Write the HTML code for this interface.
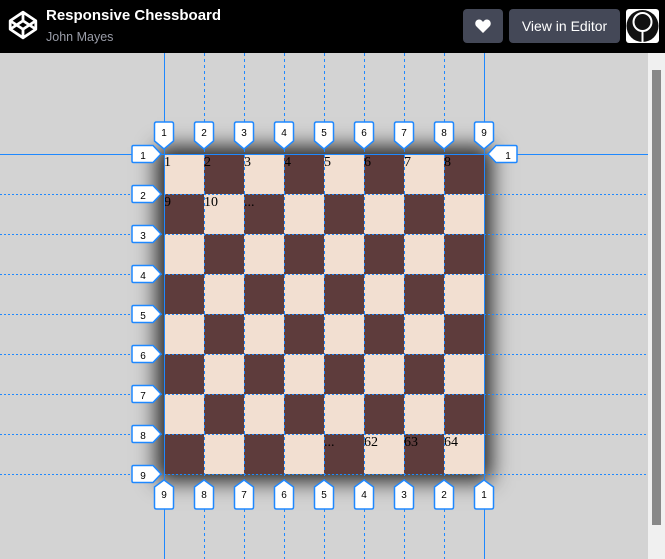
<!DOCTYPE html>
<html><head><meta charset="utf-8"><style>
*{margin:0;padding:0;box-sizing:border-box}
html,body{width:665px;height:559px;overflow:hidden}
body{background:#d3d3d3;position:relative;font-family:"Liberation Sans",sans-serif}
.hdr{position:absolute;left:0;top:0;width:665px;height:53px;background:#000}
.t1{position:absolute;left:46px;top:7px;color:#fff;font-weight:bold;font-size:15px}
.t2{position:absolute;left:46px;top:30px;color:#9a9da8;font-size:12.5px}
.btn{position:absolute;top:9px;height:34px;background:#444857;border-radius:4px;color:#fff}
.sb{position:absolute;left:648px;top:53px;width:17px;height:506px;background:#f0f0f0}
.th{position:absolute;left:4px;top:17px;width:9px;height:455px;background:#888}
.board{position:absolute;left:164px;top:154px;width:320px;height:320px;display:grid;grid-template-columns:repeat(8,40px);grid-template-rows:repeat(8,40px);box-shadow:0 0 20px 7px rgba(0,0,0,.85)}
.board div{font-family:"Liberation Serif",serif;font-size:14px;line-height:18px;color:#000}
.l{background:#f2dfd1}.d{background:#5e3c3c}
svg.ov{position:absolute;left:0;top:0}
</style></head><body>
<div class="hdr">
<svg style="position:absolute;left:7px;top:9px" width="32" height="32" viewBox="0 0 30 30" fill="none" stroke="#fff" stroke-width="2.6" stroke-linejoin="round"><path d="M15 3 L27 11 V19 L15 27 L3 19 V11 Z M3 11 L15 19 L27 11 M3 19 L15 11 L27 19 M15 3 V11 M15 19 V27"/></svg>
<div class="t1">Responsive Chessboard</div>
<div class="t2">John Mayes</div>
<div class="btn" style="left:463px;width:40px"><svg style="position:absolute;left:12px;top:10px" width="16" height="14" viewBox="0 0 16 14"><path d="M8 14 L1.5 7.5 C-1 5 0.5 0.5 4 0.5 C6 0.5 7 1.5 8 3 C9 1.5 10 0.5 12 0.5 C15.5 0.5 17 5 14.5 7.5 Z" fill="#fff"/></svg></div>
<div class="btn" style="left:509px;width:111px;font-size:14px;line-height:34px;text-align:center">View in Editor</div>
<div style="position:absolute;left:626px;top:9px;width:33px;height:34px;background:#fff;border-radius:3px;overflow:hidden"><svg width="33" height="34" viewBox="0 0 33 34"><circle cx="16.5" cy="17" r="16" fill="#111"/><circle cx="16.5" cy="13" r="9" fill="none" stroke="#fff" stroke-width="2"/><path d="M16.5 22 V33" stroke="#fff" stroke-width="2"/></svg></div>
</div>
<div class="sb"><div class="th"></div></div>
<div class="board">
<div class="l">1</div><div class="d">2</div><div class="l">3</div><div class="d">4</div><div class="l">5</div><div class="d">6</div><div class="l">7</div><div class="d">8</div>
<div class="d">9</div><div class="l">10</div><div class="d">...</div><div class="l"></div><div class="d"></div><div class="l"></div><div class="d"></div><div class="l"></div>
<div class="l"></div><div class="d"></div><div class="l"></div><div class="d"></div><div class="l"></div><div class="d"></div><div class="l"></div><div class="d"></div>
<div class="d"></div><div class="l"></div><div class="d"></div><div class="l"></div><div class="d"></div><div class="l"></div><div class="d"></div><div class="l"></div>
<div class="l"></div><div class="d"></div><div class="l"></div><div class="d"></div><div class="l"></div><div class="d"></div><div class="l"></div><div class="d"></div>
<div class="d"></div><div class="l"></div><div class="d"></div><div class="l"></div><div class="d"></div><div class="l"></div><div class="d"></div><div class="l"></div>
<div class="l"></div><div class="d"></div><div class="l"></div><div class="d"></div><div class="l"></div><div class="d"></div><div class="l"></div><div class="d"></div>
<div class="d"></div><div class="l"></div><div class="d"></div><div class="l"></div><div class="d">...</div><div class="l">62</div><div class="d">63</div><div class="l">64</div>
</div>
<svg class="ov" width="648" height="559" viewBox="0 0 648 559" font-family="Liberation Sans,sans-serif" font-size="10" text-anchor="middle">
<g stroke="#1e88ff" stroke-width="1" fill="none">
<path d="M164.5 53V559M484.5 53V559M0 154.5H648"/>
<path stroke-dasharray="3,3" d="M204.5 53V559M244.5 53V559M284.5 53V559M324.5 53V559M364.5 53V559M404.5 53V559M444.5 53V559"/>
<path stroke-dasharray="2,2" d="M0 194.5H648M0 234.5H648M0 274.5H648M0 314.5H648M0 354.5H648M0 394.5H648M0 434.5H648M0 474.5H648"/>
</g>
<defs>
<path id="tp" d="M-9.5 -31 q0-2 2-2 h15 q2 0 2 2 v17 l-9.5 8 l-9.5 -8 z"/>
<path id="bp" d="M-9.5 33 q0 2 2 2 h15 q2 0 2 -2 v-20 l-9.5 -7 l-9.5 7 z"/>
<path id="lp" d="M-31 -8 q0-1.5 1.5-1.5 h19.5 l8 8.5 l-8 8.5 h-19.5 q-1.5 0 -1.5 -1.5 z"/>
<path id="rp" d="M31 -8 q0-1.5 -1.5-1.5 h-19.5 l-8 8.5 l8 8.5 h19.5 q1.5 0 1.5 -1.5 z"/>
</defs>
<g fill="#fff" stroke="#1e88ff" stroke-width="1.5">
<use href="#tp" x="164" y="155"/><use href="#tp" x="204" y="155"/><use href="#tp" x="244" y="155"/><use href="#tp" x="284" y="155"/><use href="#tp" x="324" y="155"/><use href="#tp" x="364" y="155"/><use href="#tp" x="404" y="155"/><use href="#tp" x="444" y="155"/><use href="#tp" x="484" y="155"/>
<use href="#bp" x="164" y="474"/><use href="#bp" x="204" y="474"/><use href="#bp" x="244" y="474"/><use href="#bp" x="284" y="474"/><use href="#bp" x="324" y="474"/><use href="#bp" x="364" y="474"/><use href="#bp" x="404" y="474"/><use href="#bp" x="444" y="474"/><use href="#bp" x="484" y="474"/>
<use href="#lp" x="163" y="155"/><use href="#lp" x="163" y="195"/><use href="#lp" x="163" y="235"/><use href="#lp" x="163" y="275"/><use href="#lp" x="163" y="315"/><use href="#lp" x="163" y="355"/><use href="#lp" x="163" y="395"/><use href="#lp" x="163" y="435"/><use href="#lp" x="163" y="475"/>
<use href="#rp" x="486" y="155"/>
</g>
<g fill="#000">
<text x="164" y="136">1</text><text x="204" y="136">2</text><text x="244" y="136">3</text><text x="284" y="136">4</text><text x="324" y="136">5</text><text x="364" y="136">6</text><text x="404" y="136">7</text><text x="444" y="136">8</text><text x="484" y="136">9</text>
<text x="164" y="498">9</text><text x="204" y="498">8</text><text x="244" y="498">7</text><text x="284" y="498">6</text><text x="324" y="498">5</text><text x="364" y="498">4</text><text x="404" y="498">3</text><text x="444" y="498">2</text><text x="484" y="498">1</text>
<text x="143" y="159">1</text><text x="143" y="199">2</text><text x="143" y="239">3</text><text x="143" y="279">4</text><text x="143" y="319">5</text><text x="143" y="359">6</text><text x="143" y="399">7</text><text x="143" y="439">8</text><text x="143" y="479">9</text>
<text x="508" y="159">1</text>
</g>
</svg>
</body></html>
